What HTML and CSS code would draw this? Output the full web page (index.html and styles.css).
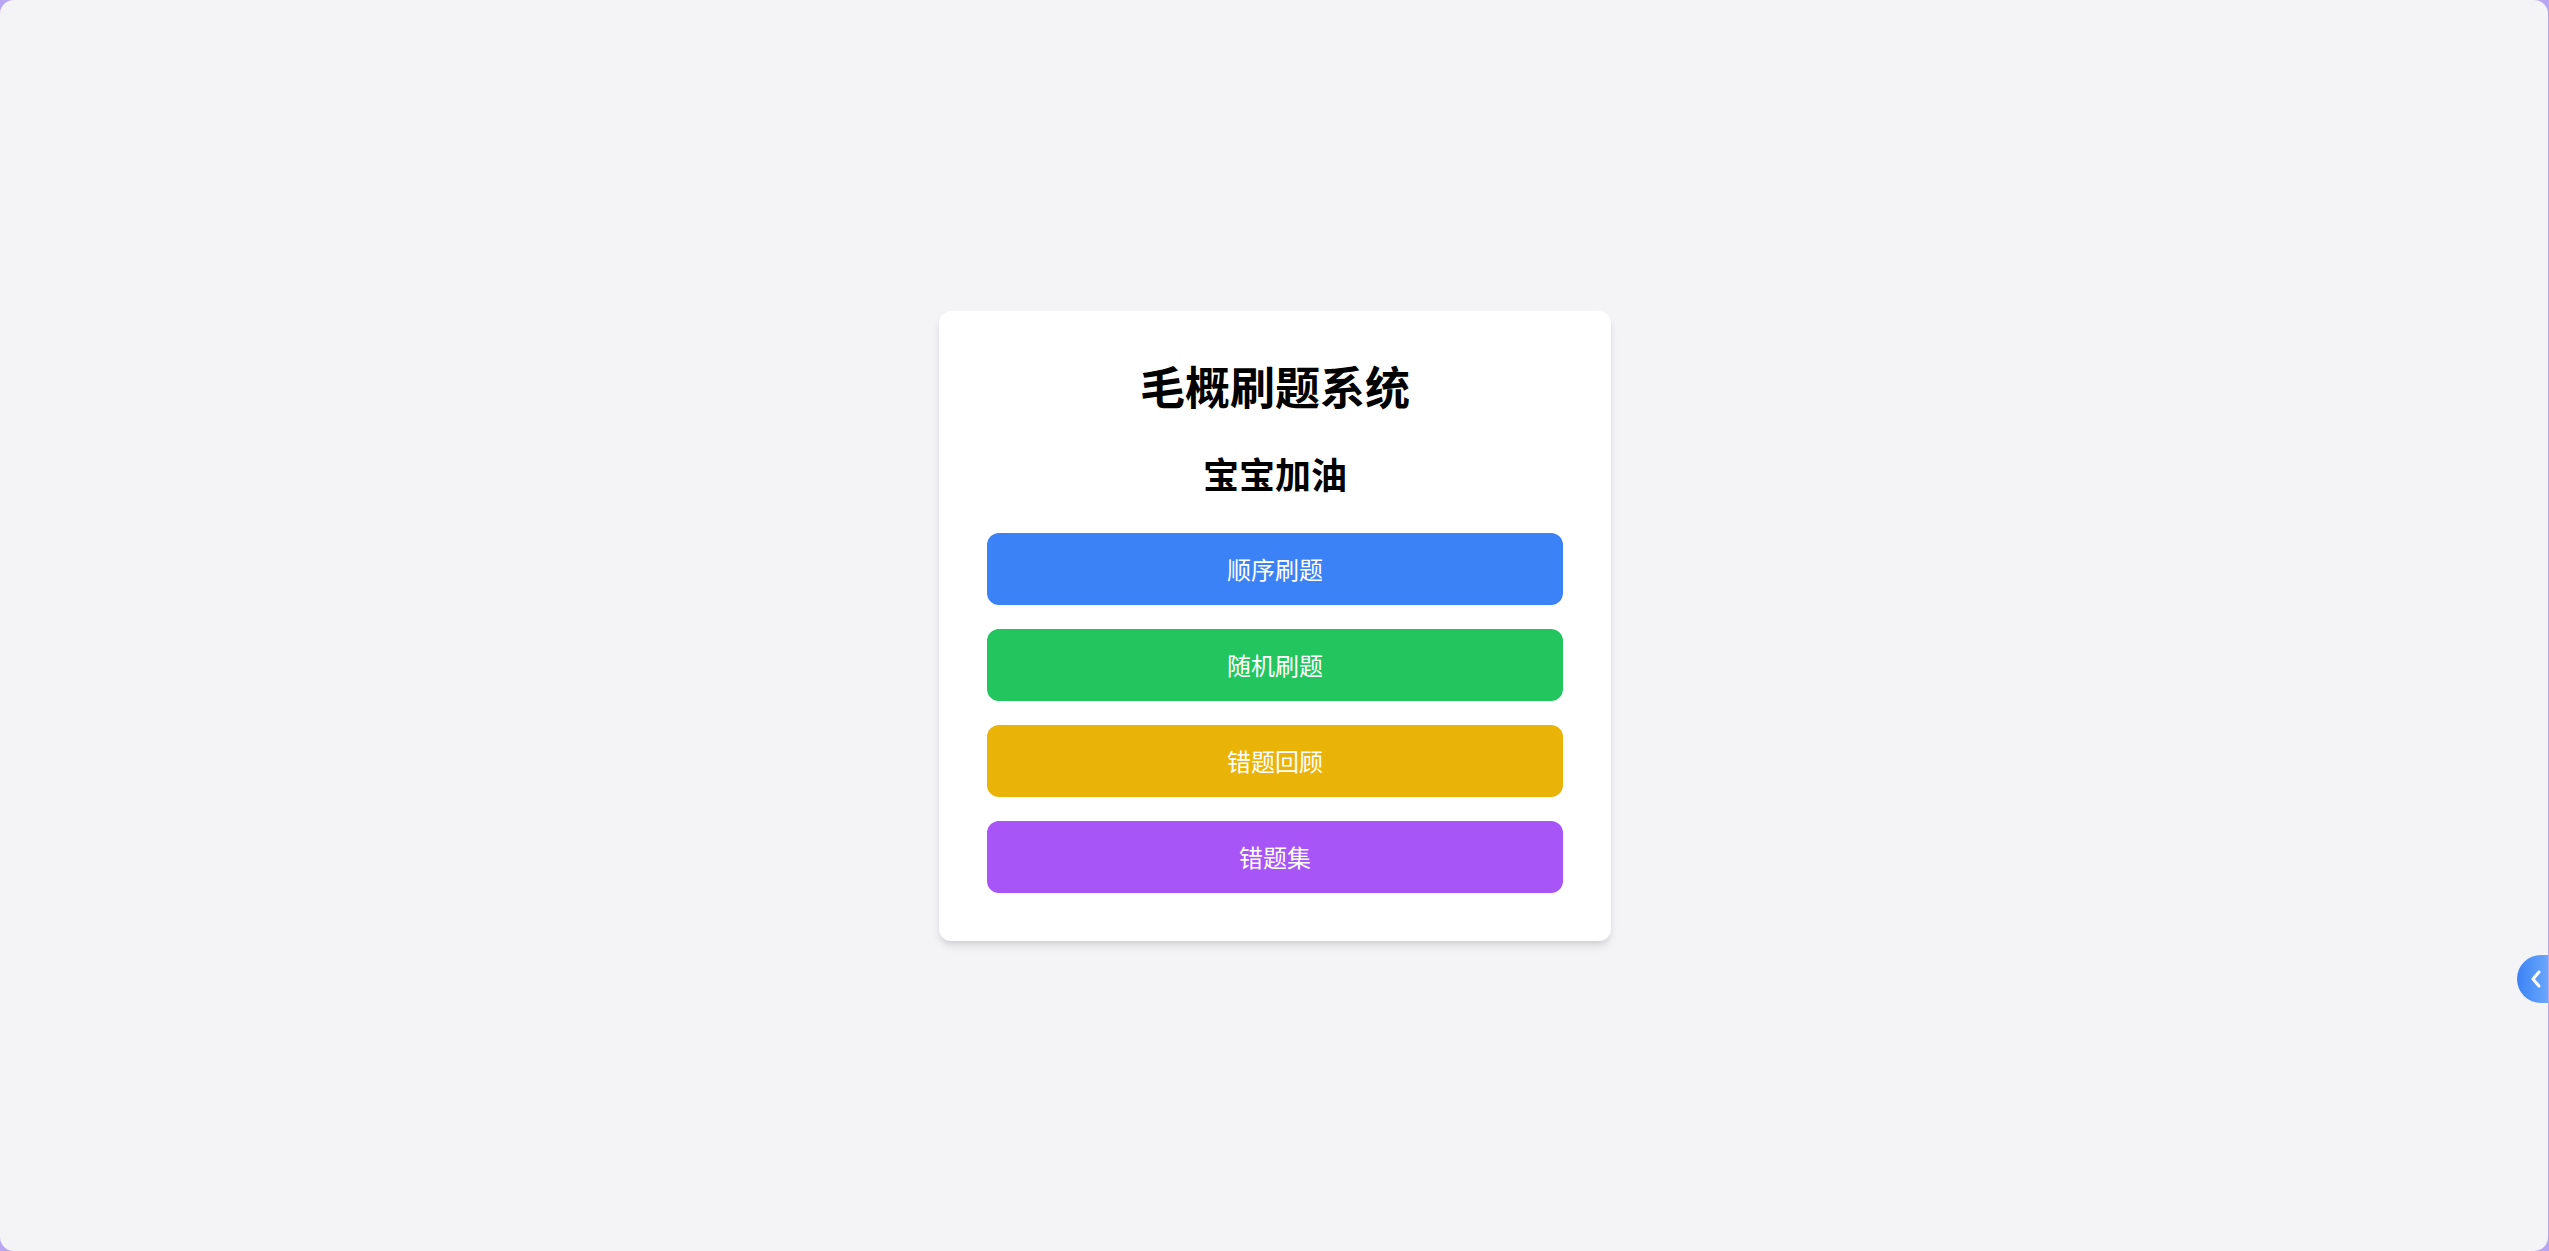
FILE: index.html
```html
<!DOCTYPE html>
<html lang="zh-CN">
<head>
<meta charset="utf-8">
<title>毛概刷题系统</title>
<link rel="stylesheet" href="styles.css">
</head>
<body>
<div class="frame">
  <main class="page">
    <section class="card">
      <h1 class="title">毛概刷题系统</h1>
      <h2 class="subtitle">宝宝加油</h2>
      <div class="actions">
        <button class="btn btn-blue">顺序刷题</button>
        <button class="btn btn-green">随机刷题</button>
        <button class="btn btn-yellow">错题回顾</button>
        <button class="btn btn-purple">错题集</button>
      </div>
    </section>
    <div class="side-tab">
      <svg width="12" height="18" viewBox="0 0 12 18"><path d="M9 2 L3 9 L9 16" fill="none" stroke="#fff" stroke-width="3" stroke-linecap="round" stroke-linejoin="round"/></svg>
    </div>
  </main>
</div>
</body>
</html>
```

FILE: styles.css
```css
* { box-sizing: border-box; }
html, body {
  margin: 0;
  padding: 0;
  height: 100%;
}
body {
  background: #b8a6f2;
  font-family: "Noto Sans CJK SC", "Noto Sans", sans-serif;
  overflow: hidden;
}
.frame {
  height: 100%;
  padding-right: 1px;
}
.page {
  position: relative;
  height: 100%;
  background: #f4f4f7;
  border-radius: 14px;
  display: flex;
  align-items: center;
  justify-content: center;
  padding-left: 2px;
}
.card {
  width: 672px;
  background: #ffffff;
  border-radius: 12px;
  padding: 48px;
  box-shadow: 0 6px 9px -1px rgba(0,0,0,0.10), 0 3px 6px -2px rgba(0,0,0,0.08);
  display: flex;
  flex-direction: column;
  margin-top: 1px;
}
.title {
  margin: 0 0 36px;
  font-size: 45px;
  line-height: 54px;
  font-weight: 700;
  text-align: center;
  color: #000;
}
.subtitle {
  margin: 0 0 36px;
  font-size: 36px;
  line-height: 48px;
  font-weight: 700;
  text-align: center;
  color: #000;
}
.actions {
  display: flex;
  flex-direction: column;
  gap: 24px;
}
.btn {
  height: 72px;
  border: none;
  border-radius: 12px;
  color: #fff;
  font-family: inherit;
  font-size: 24px;
  line-height: 36px;
  font-weight: 400;
  cursor: pointer;
}
.btn-blue { background: #3b82f6; }
.btn-green { background: #22c55e; }
.btn-yellow { background: #eab308; }
.btn-purple { background: #a855f7; }
.side-tab {
  position: absolute;
  right: 0;
  top: 955px;
  width: 31px;
  height: 48px;
  border-radius: 24px 0 0 24px;
  background: linear-gradient(90deg, #3b82f6, #6aa7fb);
  display: flex;
  align-items: center;
  justify-content: flex-end;
  padding-right: 6px;
}
```
